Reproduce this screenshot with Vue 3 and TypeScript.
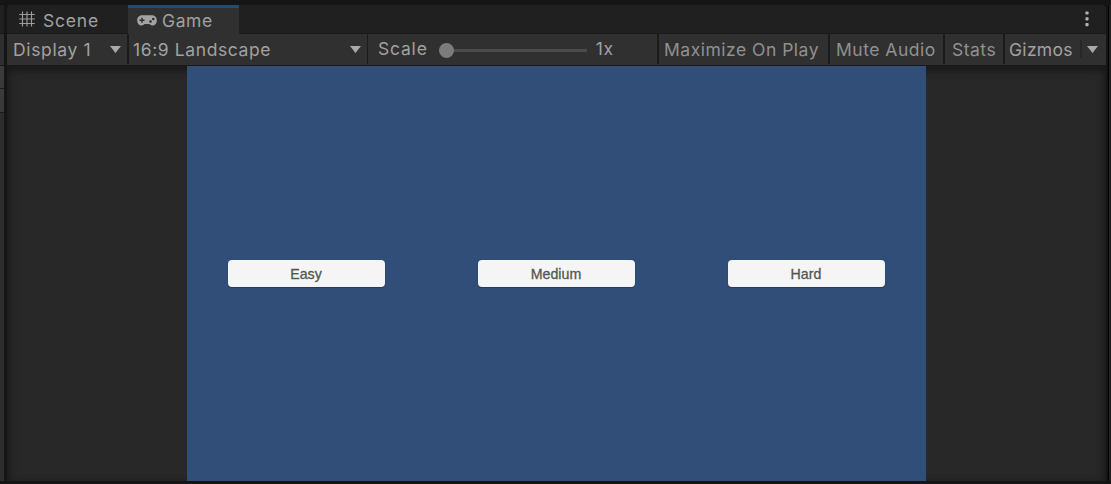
<script setup lang="ts">
import { ref } from 'vue'

interface Toggle {
  label: string
  kind: string
}

const toggles: Toggle[] = [
  { label: 'Maximize On Play', kind: 'maximize' },
  { label: 'Mute Audio', kind: 'mute' },
  { label: 'Stats', kind: 'stats' },
]

const levels = ['Easy', 'Medium', 'Hard']
const selected = ref<string | null>(null)
</script>

<template>
  <div class="editor">
    <aside class="side">
      <div class="side-tab"></div>
      <div class="side-bar"></div>
      <div class="side-row"></div>
      <div class="side-row"></div>
      <div class="side-rest"></div>
    </aside>

    <main class="panel">
      <nav class="tabs">
        <div class="tab scene">
          <svg class="grid-icon" viewBox="0 0 16 16" width="16" height="16">
            <path d="M3.5 0.5V15.5M8 0.5V15.5M12.5 0.5V15.5M0.2 3.5H15.8M0.2 8H15.8M0.2 12.5H15.8" />
          </svg>
          <span class="txt">Scene</span>
        </div>
        <div class="tab game">
          <svg class="pad-icon" viewBox="0 0 20 11" width="20" height="11">
            <path
              class="body"
              d="M5 .3H15C18 .3 19.8 2.6 19.8 5.4C19.8 8.2 18 10.5 15.4 10.5C13.6 10.5 13 9 12 9H8C7 9 6.4 10.5 4.6 10.5C2 10.5 .2 8.2 .2 5.4C.2 2.6 2 .3 5 .3Z"
            />
            <path class="cross" d="M5 2.8V7.8M2.5 5.3H7.5" />
            <circle class="dot" cx="16.3" cy="4" r="1.3" />
            <circle class="dot" cx="13.6" cy="6.5" r="1.3" />
          </svg>
          <span class="txt">Game</span>
        </div>
        <svg class="more" viewBox="0 0 4 16" width="4" height="16">
          <rect x=".4" y=".4" width="3.2" height="3.2" rx=".8" />
          <rect x=".4" y="6.2" width="3.2" height="3.2" rx=".8" />
          <rect x=".4" y="12" width="3.2" height="3.2" rx=".8" />
        </svg>
      </nav>

      <div class="toolbar">
        <div class="cell display">
          <span class="txt">Display 1</span>
          <svg class="arrow" viewBox="0 0 11 7" width="11" height="7"><path d="M0 0H11L5.5 7Z" /></svg>
        </div>
        <div class="cell aspect">
          <span class="txt">16:9 Landscape</span>
          <svg class="arrow" viewBox="0 0 11 7" width="11" height="7"><path d="M0 0H11L5.5 7Z" /></svg>
        </div>
        <div class="cell scale">
          <span class="txt">Scale</span>
          <div class="slider"><span class="knob"></span><span class="track"></span></div>
          <span class="txt value">1x</span>
        </div>
        <div v-for="t in toggles" :key="t.kind" class="cell" :class="t.kind">
          <span class="txt">{{ t.label }}</span>
        </div>
        <div class="cell gizmos">
          <span class="txt">Gizmos</span>
          <i class="divider"></i>
          <svg class="arrow" viewBox="0 0 11 7" width="11" height="7"><path d="M0 0H11L5.5 7Z" /></svg>
        </div>
      </div>

      <section class="viewport">
        <div class="stage">
          <button v-for="l in levels" :key="l" class="level" type="button" @click="selected = l">
            {{ l }}
          </button>
        </div>
      </section>
    </main>
    <div class="edge"></div>
  </div>
</template>

<style>
body {
  margin: 0;
  background: #161616;
}
</style>

<style scoped>
.editor {
  box-sizing: border-box;
  width: 1111px;
  height: 484px;
  padding: 5px 0 3px;
  display: flex;
  background: #151515;
  overflow: hidden;
  font-family: Inter, "Liberation Sans", sans-serif;
  font-size: 17.5px;
  color: #a1a1a1;
}
.side {
  width: 4px;
  margin-right: 3px;
  display: flex;
  flex-direction: column;
}
.side-tab { height: 28px; background: #202020; border-bottom: 1px solid #191919; }
.side-bar { height: 31px; background: #2f2f2f; border-bottom: 1px solid #191919; }
.side-row { height: 22px; background: #3a3a3a; border-bottom: 1px solid #1b1b1b; }
.side-row + .side-row { height: 23px; }
.side-rest { flex: 1; background: #2d2d2d; }
.panel {
  width: 1099px;
  display: flex;
  flex-direction: column;
  border-radius: 4px 4px 0 0;
  overflow: hidden;
}
.edge {
  box-sizing: border-box;
  width: 5px;
  border-left: 2px solid #151515;
  border-right: 2px solid #222;
  background: #000;
}
.txt {
  white-space: nowrap;
  line-height: 22px;
  letter-spacing: 0.5px;
}
.tabs {
  height: 29px;
  display: flex;
  background: #202020;
  box-shadow: inset 0 -1px #191919;
}
.tab {
  box-sizing: border-box;
  display: flex;
  align-items: flex-start;
}
.tab .txt { padding-top: 5px; }
.scene { width: 121px; padding-left: 12px; }
.scene .txt { margin-left: 8px; letter-spacing: 0.8px; }
.grid-icon { margin-top: 6px; fill: none; stroke: #9c9c9c; stroke-width: 1.15; }
.game {
  width: 111px;
  padding-left: 9px;
  background: #303030;
  box-shadow: inset 0 3px #244c70;
}
.game .txt { margin-left: 5px; letter-spacing: 0.6px; }
.pad-icon { margin-top: 10px; }
.pad-icon .body { fill: #a3a3a3; }
.pad-icon .cross { stroke: #303030; stroke-width: 1.5; }
.pad-icon .dot { fill: #303030; }
.more { margin: 6px 17px 0 auto; fill: #b0b0b0; }
.toolbar {
  box-sizing: border-box;
  height: 32px;
  display: flex;
  background: #303030;
  border-bottom: 1px solid #191919;
}
.cell {
  box-sizing: border-box;
  height: 30px;
  display: flex;
  align-items: center;
  border-right: 2px solid #1b1b1b;
}
.cell .txt { padding-top: 2px; }
.arrow { fill: #a9a9a9; margin-left: auto; }
.display { width: 122px; padding-left: 6px; }
.display .txt { letter-spacing: 0.65px; }
.display .arrow, .aspect .arrow { margin-right: 6.5px; }
.aspect { width: 239px; padding-left: 4px; border-right-width: 1px; }
.aspect .txt { letter-spacing: 0.6px; }
.scale { width: 291px; padding-left: 10px; }
.scale .txt { padding-top: 0; letter-spacing: 0.8px; }
.slider { width: 148px; margin-left: 11px; display: flex; align-items: center; padding-top: 2px; }
.knob { width: 15px; height: 15px; border-radius: 50%; background: #7c7c7c; flex: none; }
.track { flex: 1; height: 3px; background: #4b4b4b; }
.scale .value { margin-left: 9px; }
.maximize { width: 171px; padding-left: 5px; color: #909090; }
.mute { width: 115px; padding-left: 6px; color: #909090; }
.stats { width: 60px; padding-left: 7px; color: #909090; }
.gizmos { flex: 1; padding-left: 4px; border-right: 0; }
.gizmos .txt { letter-spacing: 0.3px; }
.divider { width: 2px; height: 18px; background: #272727; margin-left: 7px; }
.gizmos .arrow { margin-right: 8px; }
.viewport {
  flex: 1;
  display: flex;
  justify-content: center;
  background: #282828;
  box-shadow: inset 0 3px 9px 1px #171717;
  clip-path: inset(0);
}
.stage {
  width: 739px;
  display: flex;
  align-items: center;
  justify-content: center;
  gap: 93px;
  background: #314e79;
}
.level {
  width: 157px;
  height: 27px;
  padding: 1px 1px 0 0;
  border: 0;
  border-radius: 4px;
  background: #f5f5f5;
  box-shadow: 0 1px 1px #26395a, 0 0 1px #26395a;
  color: #555;
  font: 14.2px/26px "Liberation Sans", Arial, sans-serif;
  -webkit-text-stroke: 0.3px #555;
}
</style>
